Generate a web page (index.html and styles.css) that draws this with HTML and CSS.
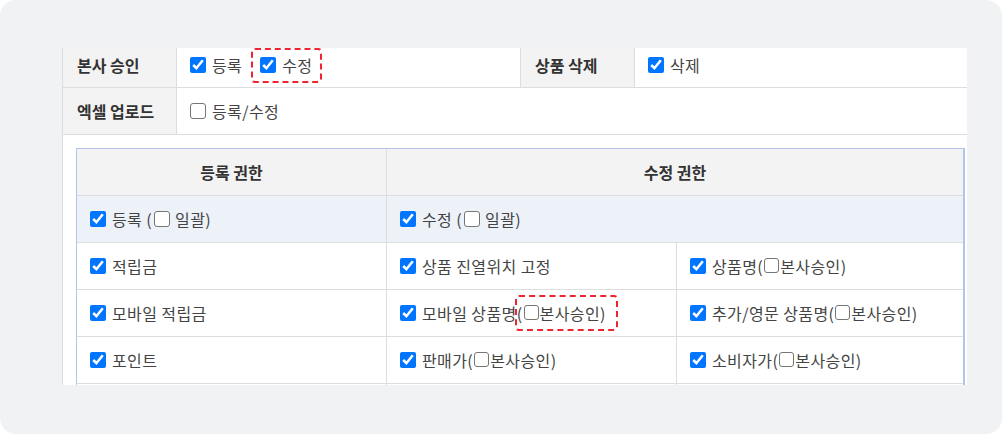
FILE: index.html
```html
<!DOCTYPE html>
<html>
<head>
  <title>상품 권한 설정</title>
  <link rel="stylesheet" href="styles.css">
</head>
<body>
  <div class="panel">
    <div class="sheet">
      <table class="form-table">
        <colgroup>
          <col class="col-label">
          <col class="col-value">
          <col class="col-label">
          <col>
        </colgroup>
        <tr class="row-approve">
          <th>본사 승인</th>
          <td>
            <label class="check"><input type="checkbox" checked>등록</label>
            <label class="check marked marked-approve"><input type="checkbox" checked>수정</label>
          </td>
          <th>상품 삭제</th>
          <td>
            <label class="check"><input type="checkbox" checked>삭제</label>
          </td>
        </tr>
        <tr class="row-excel">
          <th>엑셀 업로드</th>
          <td colspan="3">
            <label class="check"><input type="checkbox">등록/수정</label>
          </td>
        </tr>
        <tr>
          <td colspan="4" class="perm-cell">
            <table class="perm-table">
              <colgroup>
                <col class="col-reg">
                <col class="col-edit">
                <col>
              </colgroup>
              <tr class="perm-head">
                <th>등록 권한</th>
                <th colspan="2">수정 권한</th>
              </tr>
              <tr class="perm-all">
                <td>
                  <label class="check"><input type="checkbox" checked>등록 (<input type="checkbox" class="inline-box">일괄)</label>
                </td>
                <td colspan="2">
                  <label class="check"><input type="checkbox" checked>수정 (<input type="checkbox" class="inline-box">일괄)</label>
                </td>
              </tr>
              <tr>
                <td><label class="check"><input type="checkbox" checked>적립금</label></td>
                <td><label class="check"><input type="checkbox" checked>상품 진열위치 고정</label></td>
                <td><label class="check"><input type="checkbox" checked>상품명(<input type="checkbox" class="inline-box tight">본사승인)</label></td>
              </tr>
              <tr>
                <td><label class="check"><input type="checkbox" checked>모바일 적립금</label></td>
                <td><label class="check"><input type="checkbox" checked>모바일 상품명<span class="marked marked-hq">(<input type="checkbox" class="inline-box tight">본사승인)</span></label></td>
                <td><label class="check"><input type="checkbox" checked>추가/영문 상품명(<input type="checkbox" class="inline-box tight">본사승인)</label></td>
              </tr>
              <tr>
                <td><label class="check"><input type="checkbox" checked>포인트</label></td>
                <td><label class="check"><input type="checkbox" checked>판매가(<input type="checkbox" class="inline-box tight">본사승인)</label></td>
                <td><label class="check"><input type="checkbox" checked>소비자가(<input type="checkbox" class="inline-box tight">본사승인)</label></td>
              </tr>
              <tr>
                <td></td>
                <td></td>
                <td></td>
              </tr>
            </table>
          </td>
        </tr>
      </table>
    </div>
  </div>
</body>
</html>
```

FILE: styles.css
```css
body {
  margin: 0;
  background-color: #ffffff;
  font-family: "Noto Sans CJK KR", "Noto Sans", sans-serif;
  font-size: 16px;
  letter-spacing: 0.4px;
  color: #444444;
}

.panel {
  width: 1002px;
  height: 434px;
  box-sizing: border-box;
  padding: 48px 35px 0 62px;
  background-color: #f1f2f4;
  border-radius: 16px;
}

.sheet {
  height: 337px;
  background-color: #ffffff;
  border-left: 1px solid #dddddd;
  overflow: hidden;
}

table {
  border-collapse: separate;
  border-spacing: 0;
  table-layout: fixed;
}

.form-table {
  width: 904px;
  margin-top: -5px;
}

.form-table .col-label {
  width: 114px;
}

.form-table .col-value {
  width: 344px;
}

.form-table th,
.form-table td {
  padding: 0 0 0 13px;
  border-bottom: 1px solid #dddddd;
  border-right: 1px solid #dddddd;
  text-align: left;
  line-height: 20px;
}

.form-table th {
  padding-left: 14px;
  background-color: #f3f3f3;
  color: #333333;
  font-weight: bold;
  letter-spacing: 0;
}

.form-table tr > :last-child {
  border-right: none;
}

.row-approve > th,
.row-approve > td {
  height: 44px;
}

.row-excel > th,
.row-excel > td {
  height: 46px;
}

.check {
  display: inline-flex;
  align-items: center;
  height: 20px;
  margin-right: 14px;
  white-space: nowrap;
}

.check input {
  flex: none;
  width: 16px;
  height: 16px;
  margin: 0 6px 0 0;
}

/* unchecked boxes drawn by hand so they keep the full size */
.check input:not(:checked) {
  appearance: none;
  box-sizing: border-box;
  border: 1.5px solid #767676;
  border-radius: 3px;
  background-color: #ffffff;
}

.check .inline-box {
  margin: 0 5px 0 2px;
}

.check .inline-box.tight {
  width: 15px;
  height: 15px;
  margin: 0 1px 0 1px;
}

.marked {
  position: relative;
  display: inline-flex;
  align-items: center;
  height: 20px;
}

.marked::after {
  content: "";
  position: absolute;
  border: 2px dashed #ee2530;
  border-radius: 4px;
}

.marked-approve::after {
  top: -7px;
  bottom: -8px;
  left: -9px;
  right: -10px;
}

.marked-hq::after {
  top: -8px;
  bottom: -8px;
  left: -2px;
  right: -12px;
}

.form-table td.perm-cell {
  padding: 13px 2px 0 13px;
  border-bottom: none;
}

.perm-table {
  width: 889px;
  border: 1px solid #b3c4ea;
  border-right-width: 2px;
}

.perm-table .col-reg {
  width: 310px;
}

.perm-table .col-edit {
  width: 290px;
}

.perm-table th,
.perm-table td {
  height: 46px;
  padding: 0 0 0 13px;
  border-bottom: 1px solid #dddddd;
  border-right: 1px solid #dddddd;
  text-align: left;
  line-height: 20px;
}

.perm-table tr > :last-child {
  border-right: none;
}

.perm-head th {
  padding: 0;
  text-align: center;
  background-color: #f3f3f3;
  color: #333333;
  font-weight: bold;
}

.perm-all td {
  background-color: #edf1f8;
}
```
